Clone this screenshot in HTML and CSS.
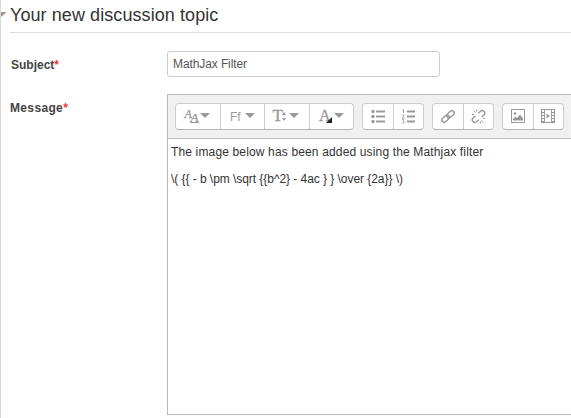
FILE: index.html
```html
<!DOCTYPE html>
<html lang="en">
<head>
<meta charset="utf-8">
<title>Your new discussion topic</title>
<link rel="stylesheet" href="styles.css">
</head>
<body>
<main class="page">
  <header class="heading">
    <svg class="toggle" width="6" height="8" viewBox="0 0 6 8"><path d="M0 1H5.500L1 5.500H0Z"/></svg>
    <h1><span>Your new discussion topic</span></h1>
  </header>
  <div class="row subject">
    <label for="subject"><span>Subject</span><b>*</b></label>
    <input id="subject" type="text" value="MathJax Filter">
  </div>
  <div class="row message">
    <label><span>Message</span><b>*</b></label>
    <section class="editor">
      <div class="toolbar">
        <div class="group styles">
          <button aria-label="Paragraph styles"><svg width="44" height="25" viewBox="0 0 44 25"><text class="serif italic" x="8.500" y="13.500" font-size="12">A</text><text class="serif italic" x="14.500" y="17.500" font-size="13">A</text><path d="M14 18.500H23" class="line thin"/><path d="M24 9H34L29 14Z"/></svg></button>
          <button aria-label="Font family"><svg width="43" height="25" viewBox="0 0 43 25"><text class="sans" x="9" y="17" font-size="12">Ff</text><path d="M24 9H34L29 14Z"/></svg></button>
          <button aria-label="Font size"><svg width="44" height="25" viewBox="0 0 44 25"><text class="serif heavy" x="7.500" y="17" font-size="17">T</text><path d="M17 11L19 8L21 11ZM17 14L19 17L21 14ZM24 9H34L29 14Z"/></svg></button>
          <button aria-label="Font colour"><svg width="43" height="25" viewBox="0 0 43 25"><text class="serif heavy" x="9" y="17" font-size="16">A</text><path d="M22 13V19H16Z" class="dark"/><path d="M24 9H34L29 14Z"/></svg></button>
        </div>
        <div class="group">
          <button aria-label="Bulleted list"><svg width="30" height="25" viewBox="0 0 30 25"><circle cx="10" cy="7.500" r="1.700"/><circle cx="10" cy="12.500" r="1.700"/><circle cx="10" cy="17.500" r="1.700"/><path d="M13 7.500H22M13 12.500H22M13 17.500H22" class="line"/></svg></button>
          <button aria-label="Numbered list"><svg width="29" height="25" viewBox="0 0 29 25"><path d="M8 6.500L9.500 5.500V9M8 11.500Q10.500 10 10 12Q10 12.500 8 14H10.500M8 15.500H10L9 17Q11 17.500 10 19H8" class="line fine"/><path d="M13 7.500H21M13 12.500H21M13 17.500H21" class="line"/></svg></button>
        </div>
        <div class="group">
          <button aria-label="Link"><svg width="30" height="25" viewBox="0 0 30 25"><g transform="translate(15 12.500) rotate(-42)" class="line chain"><rect x="-7.500" y="-2.300" width="8.500" height="4.600" rx="2.300"/><rect x="-1" y="-2.300" width="8.500" height="4.600" rx="2.300"/></g></svg></button>
          <button aria-label="Unlink"><svg width="29" height="25" viewBox="0 0 29 25"><g transform="translate(14.500 12.500) rotate(-42)" class="line chain"><path d="M-2 -2.500H-5Q-7.500 -2.500 -7.500 0T-5 2.500H-2M2 -2.500H5Q7.500 -2.500 7.500 0T5 2.500H2"/></g><path d="M9.500 6.500L11.500 8.500M12.500 5.500V7.500M8 10.500H10M17.500 16.500L19.500 18.500M16.500 17.500V19.500M19 14.500H21" class="line thin"/></svg></button>
        </div>
        <div class="group">
          <button aria-label="Image"><svg width="30" height="25" viewBox="0 0 30 25"><rect x="8.500" y="5.500" width="13" height="13" class="line thin"/><path d="M10 16.500V15L12.500 12.500L14 14L17 10.500L20 14.500V16.500Z"/><circle cx="12" cy="9.500" r="1.200"/></svg></button>
          <button aria-label="Media"><svg width="29" height="25" viewBox="0 0 29 25"><path fill-rule="evenodd" d="M7 5H21V19H7ZM8 6V8H10V6ZM8 9V11H10V9ZM8 12V14H10V12ZM8 15V17H10V15ZM18 6V8H20V6ZM18 9V11H20V9ZM18 12V14H20V12ZM18 15V17H20V15ZM11 6V18H17V6Z"/><path d="M12.500 9.500L16 12L12.500 14.500Z"/></svg></button>
        </div>
      </div>
      <div class="content">
        <p><span class="intro">The image below has been added using the Mathjax filter</span></p>
        <p><span class="formula">\( {{ - b \pm \sqrt {{b^2} - 4ac } } \over {2a}} \)</span></p>
      </div>
    </section>
  </div>
</main>
</body>
</html>
```
FILE: styles.css
```css
* { box-sizing: border-box; }
body {
  margin: 0;
  overflow: hidden;
  background: #fff;
  color: #333;
  font: 12px/18px "Liberation Sans", Arial, sans-serif;
}
.page { height: 418px; border-left: 1px solid #d8d8d0; }
.heading { display: flex; height: 33px; }
.toggle { flex: none; width: 6px; height: 8px; margin: 11px 3px 0 0; }
h1 {
  flex: 1;
  margin: 0;
  border-bottom: 1px solid #ddd;
  font-size: 18px;
  font-weight: 400;
  line-height: 30px;
  letter-spacing: 0.08px;
  white-space: nowrap;
}
.row { display: flex; padding-left: 9px; }
.subject { padding-top: 18px; height: 61px; }
label { width: 157px; flex: none; font-weight: 700; color: #444; }
.subject label { padding-top: 5px; padding-left: 1px; }
.message label { padding-top: 5px; letter-spacing: 0.35px; }
label b { color: #f33; }
input {
  width: 273px;
  height: 26px;
  padding: 0 5px;
  border: 1px solid #ccc;
  border-radius: 3px;
  outline: 0;
  background: #fff;
  color: #555;
  font: inherit;
  letter-spacing: -0.1px;
}
.editor { flex: 1; height: 321px; border: 1px solid #bbb; border-right: 0; }
.toolbar {
  display: flex;
  gap: 8px;
  height: 44px;
  padding: 8px 7px;
  background: #f0f0f0;
  border-bottom: 1px solid #bbb;
}
.group {
  display: flex;
  flex: none;
  height: 27px;
  border: 1px solid #ccc;
  border-bottom-color: #b3b3b3;
  border-radius: 4px;
  background: #fff;
  overflow: hidden;
}
button { display: block; padding: 0; border: 0; background: none; }
button + button { border-left: 1px solid #ccc; }
svg { display: block; fill: #999; }
.line { fill: none; stroke: #999; stroke-width: 2; }
.thin { stroke-width: 1; }
.fine { stroke-width: 0.8; }
.chain { stroke-width: 1.4; }
.dark { fill: #222; }
.serif { font-family: "Liberation Serif", serif; }
.sans { font-family: "Liberation Sans", sans-serif; }
.italic { font-style: italic; }
.italic, .heavy { stroke: #999; stroke-width: 0.3; }
.content { padding: 4px 3px; color: #333; }
p { margin: 0 0 9px; white-space: nowrap; }
.intro { letter-spacing: 0.15px; }
.formula { letter-spacing: -0.05px; }
```
